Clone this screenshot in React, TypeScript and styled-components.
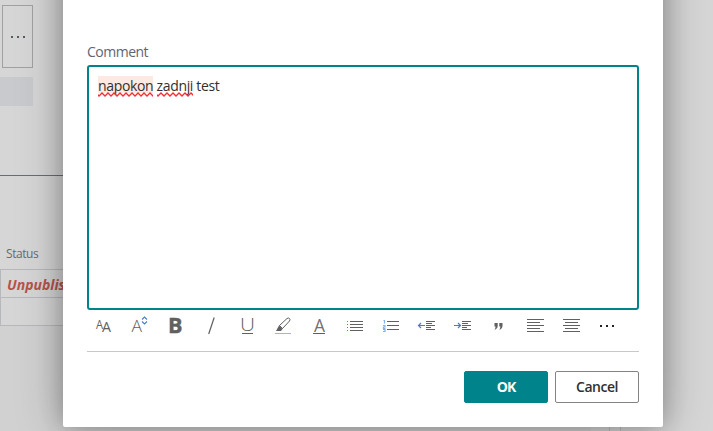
import React from "react";
import styled, { createGlobalStyle } from "styled-components";

const GlobalStyle = createGlobalStyle`
  * { box-sizing: border-box; }
  html, body { margin: 0; height: 100%; overflow: hidden; }
  body { font-family: "Open Sans", "Noto Sans", sans-serif; background: #d6d6d6; }
`;

const Page = styled.div`
  position: relative;
  width: 713px;
  height: 431px;
  overflow: hidden;
  background: #d6d6d6;
`;

const Backdrop = styled.main`
  display: flex;
  flex-direction: column;
  height: 431px;
  background: #d6d6d6;
`;

const MoreTile = styled.div`
  display: flex;
  align-items: center;
  justify-content: center;
  width: 31px;
  height: 63px;
  margin: 5px 0 0 2px;
  border: 1px solid #a1a1a1;
`;

const Placeholder = styled.div`
  width: 33px;
  height: 29px;
  margin-top: 9px;
  background: #c8cacd;
`;

const SectionRule = styled.div`
  width: 591px;
  height: 1px;
  margin-top: 69px;
  background: #666e78;
`;

const ColumnHead = styled.div`
  height: 93px;
  padding: 70px 0 0 6px;
  font-size: 12px;
  line-height: 16px;
  letter-spacing: -0.45px;
  color: #666b75;
`;

const Row = styled.div`
  width: 591px;
  height: 28px;
  padding-left: 6px;
  border-top: 1px solid #b7b8bc;
  border-left: 1px solid #b7b8bc;
  font-size: 14px;
  line-height: 29px;
  font-weight: 700;
  font-style: italic;
  letter-spacing: 0;
  color: #b8524e;
`;

const Below = styled.div`
  display: flex;
  flex: 1;
  align-items: flex-end;
`;

const BelowTable = styled.div`
  width: 591px;
  height: 100%;
  border-top: 1px solid #b7b8bc;
  background: #d1d1d1;
`;

const Gutter = styled.div`
  width: 12px;
  height: 20px;
  margin-left: 18px;
  border: solid #bdbdbd;
  border-width: 0 1px;
`;

const Dialog = styled.section`
  position: absolute;
  left: 63px;
  top: -60px;
  display: flex;
  flex-direction: column;
  width: 600px;
  height: 487px;
  padding: 102px 24px 24px;
  border-radius: 2px;
  background: #fff;
  box-shadow: 0 0 48px rgba(0, 0, 0, 0.26), 0 0 24px rgba(0, 0, 0, 0.24);
`;

const Label = styled.label`
  height: 23px;
  font-size: 14px;
  line-height: 20px;
  letter-spacing: -0.5px;
  color: #5d6575;
`;

const Editor = styled.div`
  height: 245px;
  flex: none;
  padding: 9px;
  border: 2px solid #00838a;
  border-radius: 3px;
  font-size: 14px;
  line-height: 20px;
  letter-spacing: -0.35px;
  color: #303030;
`;

const Misspelt = styled.span<{ $marked?: boolean }>`
  position: relative;
  display: inline-block;
  height: 17px;
  line-height: 20px;
  background: ${(p) => (p.$marked ? "#fde8e2" : "transparent")};
  svg { position: absolute; left: 0; top: 16px; width: 100%; height: 6px; overflow: hidden; }
`;

const Toolbar = styled.div`
  display: flex;
  flex: none;
  width: 540px;
  height: 41px;
  margin-left: -2px;
`;

const Tool = styled.button`
  width: 36px;
  height: 30px;
  padding: 0;
  border: 0;
  background: none;
  svg { display: block; }
  text { font-family: "Open Sans", sans-serif; fill: #606060; }
`;

const Footer = styled.footer`
  display: flex;
  justify-content: flex-end;
  gap: 7px;
  padding-top: 19px;
  border-top: 1px solid #c8c8c8;
`;

const Button = styled.button<{ $primary?: boolean }>`
  width: 84px;
  height: 32px;
  padding: 0 0 1px;
  border: 1px solid ${(p) => (p.$primary ? "#00838a" : "#838383")};
  border-radius: 2px;
  background: ${(p) => (p.$primary ? "#00838a" : "#fff")};
  color: ${(p) => (p.$primary ? "#fff" : "#303030")};
  font-family: inherit;
  font-size: 14px;
  font-weight: ${(p) => (p.$primary ? 700 : 600)};
  letter-spacing: ${(p) => (p.$primary ? "-0.9px" : "-0.5px")};
`;

const Squiggle = ({ width }: { width: number }) => {
  let d = "M-2 1";
  for (let x = 1, i = 0; x <= width + 3; x += 3, i++) d += `L${x} ${i % 2 ? 1 : 4}`;
  return (
    <svg>
      <path d={d} fill="none" stroke="#f52f2f" strokeWidth="1.4" />
    </svg>
  );
};

const Bar = ({ x, y, w, c = "#606060" }: { x: number; y: number; w: number; c?: string }) => (
  <rect x={x} y={y} width={w} height="1" fill={c} />
);

const BLUE = "#3f7fd0";

const tools: { name: string; art: React.ReactNode }[] = [
  {
    name: "Font",
    art: (
      <>
        <text x="11" y="18.5" fontSize="12.5" textLength="7" lengthAdjust="spacingAndGlyphs">A</text>
        <text x="17" y="22" fontSize="14" textLength="9" lengthAdjust="spacingAndGlyphs">A</text>
      </>
    ),
  },
  {
    name: "Font size",
    art: (
      <>
        <text x="10.5" y="22" fontSize="17" fontWeight="300" textLength="10.5" lengthAdjust="spacingAndGlyphs">A</text>
        <path d="M20 9.5l2.5-2.5 2.5 2.5M20 11.5l2.5 2.5 2.5-2.5" transform="translate(1 0)" fill="none" stroke={BLUE} strokeWidth="1.1" />
      </>
    ),
  },
  { name: "Bold", art: <text x="11" y="22.5" fontSize="20.5" fontWeight="700" textLength="14.5" lengthAdjust="spacingAndGlyphs" stroke="#606060" strokeWidth="0.4">B</text> },
  { name: "Italic", art: <path d="M21.2 7.5L15.7 24" stroke="#606060" strokeWidth="1.2" /> },
  {
    name: "Underline",
    art: (
      <>
        <text x="11" y="20.5" fontSize="18.5" fontWeight="300" textLength="15" lengthAdjust="spacingAndGlyphs">U</text>
        <Bar x={13} y={23} w={11} />
      </>
    ),
  },
  {
    name: "Highlight",
    art: (
      <>
        <path d="M14.5 15.5L22 8.5q1.5-1 2.5 0t0 2.5L17.5 18.5zM14.5 15.5l3 3" fill="none" stroke="#606060" />
        <path d="M14 15.5l3.5 3.5-1.5 2h-5z" fill="#606060" />
        <Bar x={10} y={23} w={16} c="#fcb100" />
      </>
    ),
  },
  {
    name: "Font color",
    art: (
      <>
        <text x="13" y="21.5" fontSize="18.5" textLength="11" lengthAdjust="spacingAndGlyphs" fillOpacity="0.9">A</text>
        <Bar x={12} y={23} w={12} c="#d83018" />
      </>
    ),
  },
  {
    name: "Bullets",
    art: [11, 14, 17, 20].map((y) => (
      <g key={y}>
        <Bar x={10} y={y} w={1} c={BLUE} />
        <Bar x={13} y={y} w={13} />
      </g>
    )),
  },
  {
    name: "Numbering",
    art: (
      <>
        <path d="M10.5 10.5h1v3M10 15.5h2v1.5h-1.5v1.5h2M10 19.5h2v2h-2" fill="none" stroke="#7fb0ec" strokeWidth="1.2" />
        {[11, 15, 19].map((y) => <Bar key={y} x={14} y={y} w={12} />)}
      </>
    ),
  },
  {
    name: "Outdent",
    art: (
      <>
        <path d="M16 15.5H9M12 13l-2.5 2.5L12 18" fill="none" stroke={BLUE} strokeWidth="1.2" />
        {[9, 6, 9, 5, 9].map((w, i) => <Bar key={i} x={17} y={11 + i * 2} w={w} />)}
      </>
    ),
  },
  {
    name: "Indent",
    art: (
      <>
        <path d="M9 15.5h7M13 13l2.5 2.5L13 18" fill="none" stroke={BLUE} strokeWidth="1.2" />
        {[9, 6, 9, 5, 9].map((w, i) => <Bar key={i} x={17} y={11 + i * 2} w={w} />)}
      </>
    ),
  },
  {
    name: "Quote",
    art: (
      <path d="M13.5 13h3.2v3q0 2.5-2.2 3.5h-1q1.2-1.2 1-3h-1zM18.3 13h3.2v3q0 2.5-2.2 3.5h-1q1.2-1.2 1-3h-1z" fill="#606060" />
    ),
  },
  { name: "Align left", art: [17, 13, 17, 13, 17].map((w, i) => <Bar key={i} x={10} y={9 + i * 3} w={w} />) },
  { name: "Center", art: [17, 13, 17, 13, 17].map((w, i) => <Bar key={i} x={10 + (17 - w) / 2} y={9 + i * 3} w={w} />) },
  { name: "More", art: [11, 17, 23].map((x) => <rect key={x} x={x} y="15" width="2" height="2" fill="#222" />) },
];

export default function App() {
  return (
    <Page>
      <GlobalStyle />
      <Backdrop>
        <MoreTile>
          <svg width="16" height="4">
            {[1, 7, 13].map((x) => <rect key={x} x={x} y="1" width="2" height="2" fill="#555b63" />)}
          </svg>
        </MoreTile>
        <Placeholder />
        <SectionRule />
        <ColumnHead>Status</ColumnHead>
        <Row>Unpublished</Row>
        <Row />
        <Below>
          <BelowTable />
          <Gutter />
        </Below>
      </Backdrop>
      <Dialog>
        <Label>Comment</Label>
        <Editor>
          <Misspelt $marked>napokon<Squiggle width={55} /></Misspelt>{" "}
          <Misspelt>zadnji<Squiggle width={36} /></Misspelt> test
        </Editor>
        <Toolbar>
          {tools.map((t) => (
            <Tool key={t.name} aria-label={t.name}>
              <svg width="36" height="30">{t.art}</svg>
            </Tool>
          ))}
        </Toolbar>
        <Footer>
          <Button $primary>OK</Button>
          <Button>Cancel</Button>
        </Footer>
      </Dialog>
    </Page>
  );
}
